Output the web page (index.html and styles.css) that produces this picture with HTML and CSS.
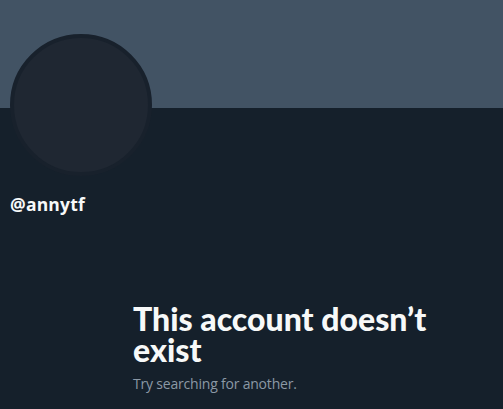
FILE: index.html
```html
<!DOCTYPE html>
<html>
<head>
<meta charset="utf-8">
<link rel="stylesheet" href="styles.css">
</head>
<body>
<div class="page">
  <div class="banner"></div>
  <div class="profile">
    <div class="avatar"></div>
    <div class="handle">@annytf</div>
  </div>
  <div class="empty">
    <h1 class="title">This account doesn’t exist</h1>
    <p class="sub">Try searching for another.</p>
  </div>
</div>
</body>
</html>
```
FILE: styles.css
```css
html, body {
  margin: 0;
  padding: 0;
  background: #15202b;
}
.page {
  width: 503px;
  height: 409px;
  overflow: hidden;
  background: #15202b;
  font-family: "Open Sans", "Noto Sans", sans-serif;
  color: #f7f9f9;
}
.banner {
  height: 108px;
  background: #425364;
}
.profile {
  padding: 0 10px;
}
.avatar {
  width: 134px;
  height: 134px;
  margin-top: -74px;
  border-radius: 50%;
  background: #1f2732;
  border: 4px solid #18212c;
}
.handle {
  margin-top: 18px;
  font-weight: 700;
  font-size: 17.5px;
  line-height: 20px;
  letter-spacing: 0.2px;
}
.empty {
  padding: 0 0 0 133px;
  margin-top: 89px;
  width: 360px;
}
.title {
  margin: 0;
  font-family: "Lato", "Open Sans", sans-serif;
  font-size: 32px;
  font-weight: 900;
  line-height: 31px;
}
.sub {
  margin: 9px 0 0;
  font-size: 14px;
  line-height: 20px;
  letter-spacing: -0.2px;
  color: #8b98a5;
}
```
